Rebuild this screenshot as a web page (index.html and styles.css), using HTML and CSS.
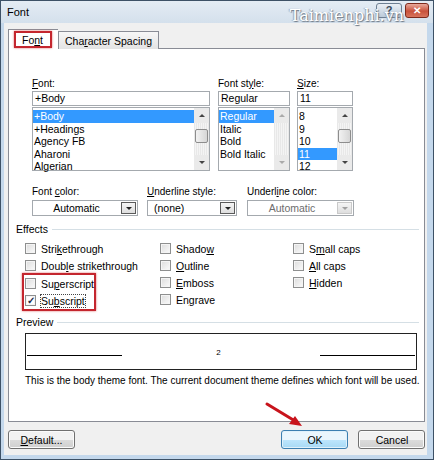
FILE: index.html
```html
<!DOCTYPE html>
<html lang="en">
  <head>
    <meta charset="UTF-8" />
    <title>Font</title>
    <link rel="stylesheet" href="styles.css">
  </head>
  <body>
    <div class="window">
      <div class="titlebar">
        <span class="title">Font</span>
        <span class="watermark">Taimienphi.vn</span>
        <div class="caption">
          <span class="cap-help">?</span>
          <span class="cap-close">✕</span>
        </div>
      </div>
      <div class="frame">
        <div class="client">
          <div class="tabs">
            <div class="tab active"><span class="mark">Fo<u>n</u>t</span></div>
            <div class="tab">Cha<u>r</u>acter Spacing</div>
          </div>
          <div class="panel">
            <div class="pickers">
              <div class="picker col-font">
                <label><u>F</u>ont:</label>
                <div class="entry">+Body</div>
                <div class="list">
                  <ul>
                    <li class="sel">+Body</li>
                    <li>+Headings</li>
                    <li>Agency FB</li>
                    <li>Aharoni</li>
                    <li>Algerian</li>
                  </ul>
                  <div class="scroll">
                    <span class="arrow up"></span>
                    <span class="track"><span class="thumb"></span></span>
                    <span class="arrow down"></span>
                  </div>
                </div>
              </div>
              <div class="picker col-style">
                <label>Font st<u>y</u>le:</label>
                <div class="entry">Regular</div>
                <div class="list">
                  <ul>
                    <li class="sel">Regular</li>
                    <li>Italic</li>
                    <li>Bold</li>
                    <li>Bold Italic</li>
                  </ul>
                  <div class="scroll off">
                    <span class="arrow up"></span>
                    <span class="track"></span>
                    <span class="arrow down"></span>
                  </div>
                </div>
              </div>
              <div class="picker col-size">
                <label><u>S</u>ize:</label>
                <div class="entry">11</div>
                <div class="list">
                  <ul>
                    <li>8</li>
                    <li>9</li>
                    <li>10</li>
                    <li class="sel">11</li>
                    <li>12</li>
                  </ul>
                  <div class="scroll">
                    <span class="arrow up"></span>
                    <span class="track"><span class="thumb"></span></span>
                    <span class="arrow down"></span>
                  </div>
                </div>
              </div>
            </div>

            <div class="combos">
              <div class="combo-field c-color">
                <label>Font <u>c</u>olor:</label>
                <div class="combo center"><span class="val">Automatic</span><span class="drop dark"></span></div>
              </div>
              <div class="combo-field c-ustyle">
                <label><u>U</u>nderline style:</label>
                <div class="combo"><span class="val">(none)</span><span class="drop dark"></span></div>
              </div>
              <div class="combo-field c-ucolor">
                <label>Underl<u>i</u>ne color:</label>
                <div class="combo center off"><span class="val">Automatic</span><span class="drop"></span></div>
              </div>
            </div>

            <div class="group-head">Effects</div>
            <div class="effects">
              <div class="fx-col fx-1">
                <div class="check"><span class="box"></span><span>Stri<u>k</u>ethrough</span></div>
                <div class="check"><span class="box"></span><span>Doub<u>l</u>e strikethrough</span></div>
                <div class="mark-box">
                  <div class="check"><span class="box"></span><span>Su<u>p</u>erscript</span></div>
                  <div class="check"><span class="box on">✓</span><span class="focus">Su<u>b</u>script</span></div>
                </div>
              </div>
              <div class="fx-col fx-2">
                <div class="check"><span class="box"></span><span>Shado<u>w</u></span></div>
                <div class="check"><span class="box"></span><span><u>O</u>utline</span></div>
                <div class="check"><span class="box"></span><span><u>E</u>mboss</span></div>
                <div class="check"><span class="box"></span><span>En<u>g</u>rave</span></div>
              </div>
              <div class="fx-col fx-3">
                <div class="check"><span class="box"></span><span>S<u>m</u>all caps</span></div>
                <div class="check"><span class="box"></span><span><u>A</u>ll caps</span></div>
                <div class="check"><span class="box"></span><span><u>H</u>idden</span></div>
              </div>
            </div>

            <div class="group-head preview-head">Preview</div>
            <div class="preview">
              <span class="rule"></span>
              <span class="sample">2</span>
              <span class="rule"></span>
            </div>
            <p class="note">This is the body theme font. The current document theme defines which font will be used.</p>
          </div>

          <div class="buttons">
            <button class="btn"><u>D</u>efault...</button>
            <span class="spacer"></span>
            <button class="btn ok">OK</button>
            <button class="btn">Cancel</button>
          </div>
        </div>
      </div>
      <svg class="pointer" width="48" height="32" viewBox="0 0 48 32">
        <path d="M4 3 L32 20" stroke="#c8141c" stroke-width="3" stroke-linecap="round" />
        <path d="M39 25 L26 23 L32 15 Z" fill="#c8141c" />
      </svg>
    </div>
  </body>
</html>
```

FILE: styles.css
```css
* {
  margin: 0;
  padding: 0;
  box-sizing: border-box;
}
body {
  width: 434px;
  height: 460px;
  overflow: hidden;
  font-family: "Liberation Sans", Arial, sans-serif;
  font-size: 10px;
  color: #000;
  background: #c9dcee;
}
u {
  text-decoration: underline;
  text-underline-offset: 1px;
}
.window {
  position: relative;
  height: 460px;
  border: 1px solid #3d5166;
  background: #c4d8ec;
  display: flex;
  flex-direction: column;
}

/* title bar */
.titlebar {
  height: 22px;
  background: linear-gradient(#e4ecf4, #d4e0ec);
  display: flex;
  align-items: center;
  padding-left: 6px;
}
.title {
  font-size: 11px;
  flex: 1;
}
.watermark {
  font-family: "DejaVu Serif", serif;
  font-size: 16px;
  color: #fff;
  text-shadow: 1px 1px 1px #6b7683, -1px 0 1px #9aa7b4;
  margin-top: 6px;
  margin-right: -28px;
  position: relative;
  z-index: 2;
}
.caption {
  display: flex;
  gap: 3px;
  margin-right: 4px;
  margin-top: -4px;
}
.cap-help,
.cap-close {
  height: 15px;
  border: 1px solid #6d7f92;
  border-radius: 3px;
  display: flex;
  align-items: center;
  justify-content: center;
  font-weight: bold;
  color: #fff;
}
.cap-help {
  width: 26px;
  background: linear-gradient(#e9eff5, #bccbda);
  color: #3a4a5a;
  font-size: 11px;
}
.cap-close {
  width: 24px;
  background: linear-gradient(#e9a99b, #c8523c 55%, #d8745c);
  border-color: #7d2a1c;
  font-size: 10px;
}

.frame {
  flex: 1;
  padding: 0 7px 4px 3px;
  display: flex;
}
.client {
  flex: 1;
  background: #f0f0f0;
  padding: 6px 2px 0 4px;
  display: flex;
  flex-direction: column;
}

/* tabs */
.tabs {
  display: flex;
  align-items: flex-end;
  margin-bottom: -1px;
  position: relative;
  z-index: 1;
}
.tab {
  height: 18px;
  padding: 0 6px;
  border: 1px solid #898c95;
  border-bottom: none;
  background: linear-gradient(#f7f7f7, #e3e3e3);
  display: flex;
  align-items: center;
  font-size: 10.5px;
}
.tab.active {
  height: 20px;
  width: 50px;
  background: #fff;
  border-right: none;
  padding: 0 0 0 5px;
}
.tab .mark {
  border: 2px solid #c4262e;
  box-shadow: 0 0 2px #e06a6a;
  padding: 0 7px 0 6px;
  height: 17px;
  display: flex;
  align-items: center;
}

/* panel */
.panel {
  height: 374px;
  background: #fff;
  border: 1px solid #898c95;
  padding: 0 5px 0 7px;
}
.pickers {
  display: flex;
  gap: 8px;
  padding: 28px 0 0 16px;
}
.picker label,
.combo-field label {
  display: block;
  line-height: 13px;
  height: 14px;
}
.col-font {
  width: 178px;
}
.col-style {
  width: 72px;
}
.col-size {
  width: 56px;
  margin-left: -1px;
}
.entry {
  height: 15px;
  border: 1px solid #a4a9ae;
  padding-left: 2px;
  line-height: 13px;
  margin-bottom: 1px;
  font-size: 10.5px;
}
.list {
  height: 64px;
  border: 1px solid #a4a9ae;
  display: flex;
  font-size: 10.5px;
}
.list ul {
  flex: 1;
  list-style: none;
  padding-top: 2px;
}
.list li {
  height: 12.5px;
  line-height: 12.5px;
  padding-left: 1px;
}
.list li.sel {
  background: #3399ff;
  color: #fff;
}
.scroll {
  width: 15px;
  display: flex;
  flex-direction: column;
  background: #eaeaea;
}
.scroll .track {
  flex: 1;
  background: repeating-linear-gradient(90deg, #e8e8e8 0 1px, #f4f4f4 1px 2px);
}
.arrow {
  height: 15px;
  display: flex;
  align-items: center;
  justify-content: center;
}
.arrow::before {
  content: "";
  border-left: 3px solid transparent;
  border-right: 3px solid transparent;
}
.arrow.up::before {
  border-bottom: 3px solid #444;
}
.arrow.down::before {
  border-top: 3px solid #444;
}
.scroll.off .arrow.up::before {
  border-bottom-color: #aaa;
}
.scroll.off .arrow.down::before {
  border-top-color: #aaa;
}
.thumb {
  display: block;
  height: 14px;
  margin: 6px 1px 0;
  border: 1px solid #8d8d8d;
  border-radius: 2px;
  background: linear-gradient(90deg, #f2f2f2, #d6d6d6);
}

/* combos */
.combos {
  display: flex;
  padding: 14px 0 0 16px;
}
.c-color {
  width: 106px;
  margin-right: 9px;
}
.c-ustyle {
  width: 90px;
  margin-right: 10px;
}
.c-ucolor {
  width: 107px;
}
.combo-field label {
  height: 15px;
}
.combo {
  height: 16px;
  border: 1px solid #a4a9ae;
  display: flex;
  align-items: stretch;
  font-size: 10.5px;
}
.combo .val {
  flex: 1;
  padding-left: 6px;
  line-height: 14px;
}
.combo.center .val {
  text-align: center;
  padding-left: 0;
}
.combo.off .val {
  color: #6d6d6d;
}
.drop {
  width: 15px;
  margin: 1px;
  border: 1px solid #c9c9c9;
  background: linear-gradient(#f5f5f5, #dedede);
  display: flex;
  align-items: center;
  justify-content: center;
}
.drop.dark {
  border-color: #5a5a5a;
}
.drop::before {
  content: "";
  border-left: 3px solid transparent;
  border-right: 3px solid transparent;
  border-top: 3px solid #222;
}
.combo.off .drop::before {
  border-top-color: #a0a0a0;
}

/* groups */
.group-head {
  display: flex;
  align-items: center;
  gap: 4px;
  line-height: 13px;
  margin-top: 7px;
  font-size: 10.5px;
}
.group-head::after {
  content: "";
  flex: 1;
  border-top: 1px solid #d5dfe5;
}
.effects {
  display: flex;
  padding: 4px 0 0 9px;
}
.fx-col {
  display: flex;
  flex-direction: column;
}
.fx-1 {
  width: 135px;
}
.fx-2 {
  width: 133px;
}
.check {
  height: 17px;
  display: flex;
  align-items: center;
  gap: 5px;
  font-size: 10.5px;
}
.box {
  width: 11px;
  height: 11px;
  border: 1px solid #8e8f8f;
  background: linear-gradient(135deg, #dcdcdc, #fbfbfb);
  box-shadow: inset 0 0 0 1px #f4f4f4;
  font-size: 10px;
  line-height: 9px;
  text-align: center;
  font-weight: bold;
  color: #1c2a4a;
}
.box.on {
  background: #fff;
}
.focus {
  outline: 1px dotted #444;
}
.mark-box {
  width: 74px;
  margin: -1px 0 -3px -3px;
  padding-left: 1px;
  border: 2px solid #c4262e;
  box-shadow: 0 0 2px #e06a6a;
}
.preview-head {
  margin-top: 8px;
}
.preview {
  margin: 4px 0 0 9px;
  width: 392px;
  height: 37px;
  border: 1px solid #222;
  display: flex;
  align-items: center;
  padding: 0 1px;
}
.rule {
  width: 95px;
  border-top: 1px solid #000;
  margin-top: 8px;
}
.sample {
  flex: 1;
  text-align: center;
  font-size: 8px;
  margin-top: 2px;
  padding-right: 5px;
  color: #000;
}
.note {
  margin: 4px 0 0 9px;
  line-height: 13px;
  font-size: 10px;
  white-space: nowrap;
}

/* buttons */
.buttons {
  display: flex;
  margin-top: 8px;
  gap: 10px;
}
.spacer {
  flex: 1;
}
.btn {
  flex: none;
  width: 67px;
  height: 19px;
  border: 1px solid #707070;
  border-radius: 3px;
  background: linear-gradient(#f2f2f2 50%, #dcdcdc 50%, #cfcfcf);
  font-family: "Liberation Sans", Arial, sans-serif;
  font-size: 10.5px;
  color: #000;
  box-shadow: inset 0 0 0 1px #fbfbfb;
}
.btn.ok {
  border-color: #3c7fb1;
  background: linear-gradient(#eaf6fd 50%, #bee6fd 50%, #a7d9f5);
  box-shadow: inset 0 0 0 1px #e0f1fb;
}
.pointer {
  position: absolute;
  left: 262px;
  top: 400px;
}
```
